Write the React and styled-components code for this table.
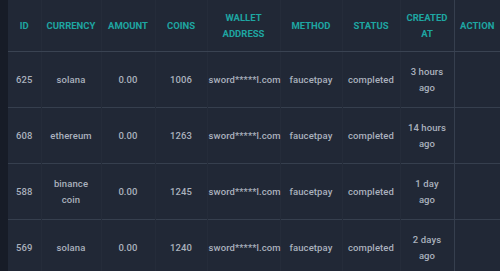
import React from 'react'
import styled, { createGlobalStyle } from 'styled-components'

const Global = createGlobalStyle`
  html, body { margin: 0; padding: 0; background: #212836; }
  body { font-family: Roboto, "Noto Sans", sans-serif; }
`;

const Page = styled.div`
  display: flex;
  height: 271px;
  overflow: hidden;
  background: #212836;
`;

const Rail = styled.div`
  width: 8px;
  flex: none;
  background: #171c27;
`;

const Table = styled.table`
  border-collapse: collapse;
  table-layout: fixed;
  width: 492px;
  flex: none;
`;

const Head = styled.th`
  height: 51px;
  padding: 0 2px;
  color: #1ea6a2;
  font-size: 9.5px;
  font-weight: 700;
  text-transform: uppercase;
  line-height: 16px;
  text-align: center;
  border-bottom: 1px solid #3a4352;
  border-left: 1px solid ${({ strong }) => strong ? '#363f4e' : '#252c3a'};
  &:first-child { border-left: 0; }
`;

const Row = styled.tr`
  border-bottom: 1px solid #363f4e;
  &:last-child { border-bottom: 0; }
`;

const Cell = styled.td`
  height: 55px;
  padding: 0 ${({ narrow }) => narrow ? '6px' : '1px'};
  color: #aab1bd;
  font-size: 9.5px;
  font-weight: 500;
  letter-spacing: 0.1px;
  line-height: 16px;
  text-align: center;
  white-space: ${({ narrow }) => narrow ? 'normal' : 'nowrap'};
  border-left: 1px solid ${({ strong }) => strong ? '#363f4e' : '#252c3a'};
  &:first-child { border-left: 0; }
`;

const cols = [33, 60, 54, 52, 73, 62, 58, 54, 46];
const heads = ['ID', 'Currency', 'Amount', 'Coins', 'Wallet address', 'Method', 'Status', 'Created at', 'Action'];

const rows = [
  { id: 625, cur: 'solana', coins: 1006, ago: '3 hours ago' },
  { id: 608, cur: 'ethereum', coins: 1263, ago: '14 hours ago' },
  { id: 588, cur: 'binance coin', coins: 1245, ago: '1 day ago' },
  { id: 569, cur: 'solana', coins: 1240, ago: '2 days ago' },
];

export default function App() {
  return (
    <Page>
      <Global />
      <Rail />
      <Table>
        <colgroup>
          {cols.map((w, i) => <col key={i} style={{ width: w }} />)}
        </colgroup>
        <thead>
          <tr>
            {heads.map((h, i) => <Head key={h} strong={i === 8}>{h}</Head>)}
          </tr>
        </thead>
        <tbody>
          {rows.map(r => (
            <Row key={r.id}>
              <Cell>{r.id}</Cell>
              <Cell narrow>{r.cur}</Cell>
              <Cell>0.00</Cell>
              <Cell>{r.coins}</Cell>
              <Cell>sword*****l.com</Cell>
              <Cell>faucetpay</Cell>
              <Cell>completed</Cell>
              <Cell narrow>{r.ago}</Cell>
              <Cell strong />
            </Row>
          ))}
        </tbody>
      </Table>
    </Page>
  )
}
